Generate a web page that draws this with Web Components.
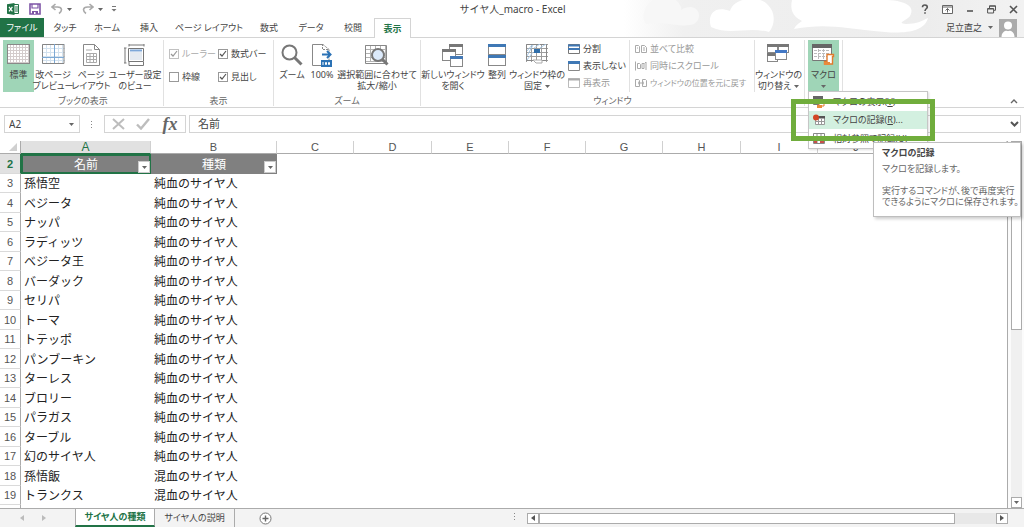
<!DOCTYPE html>
<html lang="ja">
<head>
<meta charset="utf-8">
<title>サイヤ人_macro - Excel</title>
<style>
html,body{margin:0;height:100%}
body{font:9px/12px "Noto Sans","Noto Sans CJK JP",sans-serif;color:#444;background:#fff;overflow:hidden}
</style>
</head>
<body>
<excel-app></excel-app>
<script>
const win = (x, y, w, h, c) => `<rect x="${x + .5}" y="${y + .5}" width="${w}" height="${h}" fill="#fff" stroke="#888"/><rect x="${x}" y="${y}" width="${w + 1}" height="3" fill="${c}"/>`;
const lines = (w, h, dx, dy, x0 = 0, y0 = 0) => {
  let d = '';
  for (let x = x0; x < w; x += dx) d += `M${x} ${y0}V${h}`;
  for (let y = y0; y < h; y += dy) d += `M${x0} ${y}H${w}`;
  return d;
};
const ICONS = {
  excel: [12, 12, '<path d="M7 1.500h4.500v9H7" fill="#fff" stroke="#217346"/><path d="M8 4h3M8 6h3M8 8h3" stroke="#217346"/><path d="M0 1.200L7.500 0v12L0 10.800z" fill="#217346"/><path d="M2 3.800l3.400 4.500M5.400 3.800L2 8.300" stroke="#fff" stroke-width="1.200"/>'],
  save: [12, 12, '<path d="M1 1h10v10H1z" fill="#fff" stroke="#7d54a6" stroke-width="1.600"/><path d="M3 1v4h6V1" fill="none" stroke="#7d54a6" stroke-width="1.200"/><path d="M3 8h6v3H3z" fill="#7d54a6"/><path d="M5 9h1.500v2H5z" fill="#fff"/>'],
  undo: [12, 12, '<path d="M4.500 1L1 4l3.500 3M1 4h5.500c5 0 5 4 1.500 6.500" fill="none" stroke="#aaa" stroke-width="1.600"/>'],
  redo: [12, 12, '<path d="M7.500 1L11 4 7.500 7M11 4H5.500c-5 0-5 4-1.500 6.500" fill="none" stroke="#aaa" stroke-width="1.600"/>'],
  caret: [5, 3, '<path d="M0 0h5L2.500 3z" fill="#666"/>'],
  custom: [6, 6, '<path d="M1 .5h4" stroke="#777"/><path d="M.5 3h5L3 5.500z" fill="#777"/>'],
  help: [8, 10, '<path d="M1.500 3.200C1.500.3 6.300.3 6.300 3c0 1.700-2.300 1.900-2.300 4M4 8.200v1.600" fill="none" stroke="#555" stroke-width="1.600"/>'],
  ribbonopt: [11, 9, '<path d="M.5.5h10v8H.5zM.5 2h10" fill="#fff" stroke="#666"/><path d="M5.500 7.500V3.500M3.500 5.500l2-2 2 2" fill="none" stroke="#666"/>'],
  min: [8, 9, '<path d="M1 6h6" stroke="#555" stroke-width="1.600"/>'],
  restore: [9, 9, '<path d="M2.500 3V.8h6v4.500H7M.6 3.500h6v4.500h-6zM.6 4h6M2.500 1.200h6" fill="none" stroke="#555"/>'],
  close: [9, 9, '<path d="M1 1l7 7M8 1L1 8" stroke="#555" stroke-width="1.600"/>'],
  user: [18, 18, '<path d="M0 0h18v18H0z" fill="#ababab"/><circle cx="9" cy="6.500" r="4" fill="#fff"/><path d="M2.500 18c0-9 13-9 13 0z" fill="#fff"/><path d="M6 10.500c2 1.500 4 1.500 6 0" stroke="#ababab" fill="none"/>'],
  normal: [23, 20, `<path d="M0 .5h22v19H0z" fill="#fff"/><path d="${lines(23, 20, 3, 3, .5, .5)}" stroke="#d3cccc" fill="none"/><rect x=".5" y=".5" width="22" height="19" fill="none" stroke="#888"/>`],
  pagebreak: [23, 20, `<path d="${lines(23, 20, 4, 4, .5, .5)}" stroke="#d3e2ef" fill="none"/><path d="M.5.500h21.500v19H.5z" fill="none" stroke="#858585"/><path d="M12.500 0v19M0 13.500h22" stroke="#7da9d4" fill="none"/>`],
  pagelayout: [17, 22, '<path d="M.5.5h11l5 5v16H.5z" fill="#fff" stroke="#888"/><path d="M11.500.5v5h5" fill="none" stroke="#888"/><path d="M3 6h6M3.500 9.500h10v9h-10zM3.500 12.500h10M3.500 15.500h10M7 9v9M10.500 9v9" fill="none" stroke="#aaa"/>'],
  userview: [22, 22, '<path d="M4.500 4.500h15v13h-15z" fill="#fff" stroke="#777"/><path d="M6 6.500h12" stroke="#7da7d8" stroke-width="2"/><path d="M6 8h12v8H6z" fill="#e4eaf1"/><path d="M1 4v15M0 4h2.500M0 19h2.500M5 1h15M5 0v2.500M20 0v2.500M19.500 18v3.500H5V18" fill="none" stroke="#777"/>'],
  zoom: [22, 22, '<circle cx="8.500" cy="8.500" r="7" fill="#fff" stroke="#777" stroke-width="2"/><path d="M13.500 13.500l7 7" stroke="#777" stroke-width="3"/>'],
  hundred: [21, 24, '<path d="M10 .5H.5v21H10" fill="#fff" stroke="#888"/><path d="M10.500 0v5.500H17V22M11 .5l6 5" fill="none" stroke="#888" stroke-dasharray="2 1"/><path d="M10 10.500h8M15 7l3.500 3.500L15 14" fill="none" stroke="#2b72b5" stroke-width="2"/><path d="M9 16h11v7H9z" fill="#2b72b5"/><path d="M11 18v3M13.500 18.500h1v2h-1zM16.500 18.500h1v2h-1z" stroke="#fff" fill="none"/>'],
  zoomsel: [24, 22, `<path d="${lines(21, 18, 5, 4, .5, 1.5)}" stroke="#b2b2b2" fill="none"/><path d="M.5 1.500h21v18H.5z" fill="none" stroke="#888"/><circle cx="13" cy="11" r="6" fill="#dceafb" stroke="#777" stroke-width="2"/><path d="M17.500 15.500l5 5" stroke="#777" stroke-width="3"/>`],
  newwin: [22, 23, win(7, 0, 13, 10, '#777') + win(0, 5, 13, 11, '#777') + win(8, 12, 12, 10, '#4479b5')],
  arrange: [20, 22, win(1, 0, 17, 10, '#3f78b5') + win(1, 11, 17, 10, '#3f78b5')],
  freeze: [22, 20, `<path d="${lines(22, 18, 5, 4, .5, .5)}" stroke="#9d9d9d" fill="none"/><path d="M.5.5h20v16H.5z" fill="none" stroke="#888"/><path d="M1 12L7 1M1 7l5-6M8 4l6-4M14 4l6-4M1 16l6-8" stroke="#aacbe8"/><path d="M8 5h6v4H8z" fill="#2f6eaa"/><path d="M7 16l3 3h6v-3z" fill="#fff" stroke="#aaa"/>`],
  split: [12, 10, '<path d="M.5.500h11v9H.5z" fill="#fff" stroke="#777"/><path d="M0 1.500h12M0 5h12" stroke="#3f78b5" stroke-width="2"/>'],
  hide: [12, 10, '<path d="M.5.500h11v9H.5z" fill="#fff" stroke="#888"/><path d="M0 1.500h12" stroke="#3f78b5" stroke-width="3"/>'],
  unhide: [12, 10, '<path d="M.5.500h11v9H.5z" fill="#fff" stroke="#bbb"/><path d="M0 1.500h12" stroke="#aaa" stroke-width="2"/>'],
  compare: [12, 10, '<path d="M.5 1.500h3l1 1v6h-4zM6.500 1.500h3l2 2v5h-5zM2 4h1M8 4h2M8 6h2" fill="none" stroke="#aaa"/>'],
  sync: [12, 10, '<path d="M.5.500v9M2.500 2.500h2l1 1v4h-3zM7 2.500h2v5H7zM11 1v8M9.500 2.500L11 1" fill="none" stroke="#aaa"/>'],
  resetpos: [12, 10, '<path d="M.5 1.500h3l1 1v6h-4zM7.500 1.500h3l1 1v6h-4zM3 5h6M4 3.500v3M8 3.500v3" fill="none" stroke="#aaa"/>'],
  switchwin: [23, 20, win(0, 0, 10, 8, '#777') + win(11, 0, 10, 8, '#777') + win(0, 9, 10, 8, '#777') + win(8, 6, 11, 9, '#4479c5')],
  macro: [24, 22, '<path d="M.5.5h19v16H.5z" fill="#fff" stroke="#777"/><path d="M0 0h20v4H0z" fill="#666"/><path d="M2 6.500h15M2 9.500h15M2 12.500h15M6.500 5v10M11.500 5v10" stroke="#bbb" stroke-dasharray="3 1"/><path d="M15 10.500h6.500v2h-1V20h-8v-2.500H15z" fill="#fff" stroke="#e07b2e" stroke-width="1.400"/><path d="M12 18h6v3h-6z" fill="#e88a3c"/>'],
  mview: [12, 12, '<path d="M.5.5h9v8h-9z" fill="#fff" stroke="#777"/><path d="M0 0h10v3H0z" fill="#666"/><path d="M6 6h5v4H6z" fill="#fff" stroke="#e07b2e"/><path d="M4 9h5v3H4z" fill="#e88a3c"/>'],
  mrec: [12, 12, '<path d="M2.500 2.500h9v8h-9zM5.500 5v5M8.500 5v5M3 7.500h8" fill="#fff" stroke="#999"/><path d="M5 2h7v2.500H5z" fill="#555"/><circle cx="3" cy="3.500" r="3" fill="#d24726"/>'],
  mrel: [12, 12, '<path d="M.5.5h11v10H.5zM4 0v11M8 0v11M0 4h12M0 7.500h12" fill="#fff" stroke="#888"/><path d="M1 8h3v2H1zM7 7h4v3H7z" fill="#c8514a"/>'],
  cancel: [13, 12, '<path d="M1 1l11 10M12 1L1 11" stroke="#bdbdbd" stroke-width="2"/>'],
  enter: [14, 12, '<path d="M1 6.500L5 10.500 13 1" fill="none" stroke="#bdbdbd" stroke-width="2.400"/>'],
  chev: [9, 6, '<path d="M1 1l3.500 3.500L8 1" fill="none" stroke="#555" stroke-width="2"/>'],
  up: [8, 5, '<path d="M1 4l3-3 3 3" fill="none" stroke="#666" stroke-width="1.400"/>'],
  dots: [2, 8, '<path d="M0 0h1v1H0zM0 3h1v1H0zM0 6h1v1H0z" fill="#888"/>'],
  left: [4, 6, '<path d="M4 0v6L0 3z" fill="currentColor"/>'],
  right: [4, 6, '<path d="M0 0v6l4-3z" fill="currentColor"/>'],
  add: [13, 13, '<circle cx="6.500" cy="6.500" r="5.500" fill="#fff" stroke="#777"/><path d="M3.500 6.500h6M6.500 3.500v6" stroke="#666" stroke-width="1.400"/>'],
  corner: [8, 8, '<path d="M8 0v8H0z" fill="#d0d0d0"/>']
};

const RESET = `*{box-sizing:border-box}
button{font:inherit;color:inherit;background:none;border:0;padding:0;margin:0;display:flex;align-items:center;justify-content:center}
input{font:inherit;color:inherit;margin:0}`;

function define(name, css, html) {
  customElements.define(name, class extends HTMLElement {
    constructor() {
      super();
      this.attachShadow({ mode: 'open' }).innerHTML =
        `<style>${RESET}${css}</style>${typeof html === 'function' ? html(this) : html}`;
    }
  });
}

define('x-icon', ':host{display:inline-block;flex:none;line-height:0}svg{display:block}', el => {
  const [w, h, body] = ICONS[el.getAttribute('name')];
  return `<svg width="${w}" height="${h}" viewBox="0 0 ${w} ${h}" aria-hidden="true">${body}</svg>`;
});

define('title-bar', `:host{display:flex;align-items:center;height:18px;padding:0 6px 0 7px;position:relative}
.quick,.win{display:flex;align-items:center;flex:1}
.quick{gap:4px}.quick button:nth-child(2){margin:0 6px}
.quick button:nth-child(4){margin-right:6px}.quick button:nth-child(6){margin-right:4px}
.win{justify-content:flex-end;gap:13px}
h1{margin:0;font-size:10px;font-weight:400}`,
`<div class="quick"><x-icon name="excel"></x-icon><button aria-label="save"><x-icon name="save"></x-icon></button>
<button aria-label="undo"><x-icon name="undo"></x-icon></button><button aria-label="undo list"><x-icon name="caret"></x-icon></button>
<button aria-label="redo"><x-icon name="redo"></x-icon></button><button aria-label="redo list"><x-icon name="caret"></x-icon></button>
<button aria-label="customize"><x-icon name="custom"></x-icon></button></div>
<h1><slot></slot></h1>
<div class="win">${['help', 'ribbonopt', 'min', 'restore', 'close'].map(n => `<button aria-label="${n}"><x-icon name="${n}"></x-icon></button>`).join('')}</div>`);

define('ribbon-tab', `:host{display:block;height:20px;width:42px}
:host([wide]){width:78px}
button{width:100%;height:19px;border:1px solid transparent;border-bottom:0;white-space:nowrap;font-feature-settings:"palt"}
:host([file]){width:44px}
:host([file]) button{background:#217346;color:#fff;border:0}
:host([active]){width:37px}
:host([active]) button{background:#fff;color:#217346;font-weight:700;border-color:#d4d4d4;height:20px}`,
'<button><slot></slot></button>');

define('ribbon-tabs', `:host{display:flex;height:20px;position:relative;border-bottom:1px solid #d4d4d4}
.tabs{display:flex}
.account{margin-left:auto;display:flex;align-items:center;padding-right:7px}
.account button{gap:6px;height:18px}`,
`<nav class="tabs"><ribbon-tab file>ファイル</ribbon-tab><ribbon-tab>タッチ</ribbon-tab><ribbon-tab>ホーム</ribbon-tab><ribbon-tab>挿入</ribbon-tab><ribbon-tab wide>ページ レイアウト</ribbon-tab><ribbon-tab>数式</ribbon-tab><ribbon-tab>データ</ribbon-tab><ribbon-tab>校閲</ribbon-tab><ribbon-tab active>表示</ribbon-tab></nav>
<div class="account"><button>足立直之<x-icon name="caret"></x-icon><x-icon name="user"></x-icon></button></div>`);

define('app-header', `:host{display:block;position:relative}
svg{position:absolute;right:0;top:0;width:400px;height:37px}`,
`<svg viewBox="0 0 400 37" preserveAspectRatio="none" aria-hidden="true"><defs><linearGradient id="g"><stop offset="0" stop-color="#fff"/><stop offset=".15" stop-color="#f0f0f0"/><stop offset=".75" stop-color="#ededed"/><stop offset="1" stop-color="#f2f2f2"/></linearGradient></defs>
<path d="M0 0h400v37H0z" fill="url(#g)"/>
<path d="M22 24c-6-8 0-22 8-24h22c4 4 6 8 5 10 10-6 18-2 18 6 0 5-5 9-9 9-12 2-22-4-44-1z" fill="#f7f7f7"/>
<path d="M87 27c-4-12 3-22 19-16 4-14 30-16 38-6 8 8 7 20 1 27-22-6-38 4-58-5z" fill="#fff"/>
<path d="M168 0h92c20 0 32 6 26 16-4 5-14 7-4 8 10 0 16-3 22-6-4 16-30 16-54 13-28-3-50-8-80-2 2-4 4-5 8-8-10-5-12-12-10-21z" fill="#fff"/></svg>
<title-bar>サイヤ人_macro - Excel</title-bar><ribbon-tabs></ribbon-tabs>`);

define('ribbon-button', `:host{display:block;flex:none}
button{width:100%;height:52px;padding-top:3px;flex-direction:column;justify-content:flex-start;white-space:nowrap;line-height:11px;font-feature-settings:"palt"}
.pic{height:24px;display:flex;align-items:flex-start;padding-top:1px;flex:none}
.text{text-align:center;padding-top:2px}
:host([active]) button{background:#9fd5b7}`,
el => `<button><span class="pic"><x-icon name="${el.getAttribute('icon')}"></x-icon></span><span class="text"><slot></slot></span></button>`);

define('ribbon-item', `:host{display:block}
button{gap:3px;height:17px;white-space:nowrap;font-feature-settings:"palt"}
:host([off]){color:#999}
:host([small]){font-size:8px}`,
el => `<button><x-icon name="${el.getAttribute('icon')}"></x-icon><span><slot></slot></span></button>`);

define('ribbon-check', `:host{display:block}
label{display:flex;align-items:center;gap:3px;height:23px;white-space:nowrap;font-feature-settings:"palt"}
input{appearance:none;width:10px;height:10px;border:1px solid #999;background:#fff;flex:none}
input:checked{background:#fff url("data:image/svg+xml,%3Csvg xmlns='http://www.w3.org/2000/svg' viewBox='0 0 8 8'%3E%3Cpath d='M1 4l2 2 4-5' fill='none' stroke='%23555' stroke-width='1.2'/%3E%3C/svg%3E")}
:host([off]){color:#aaa}:host([off]) input{opacity:.6}`,
el => `<label><input type="checkbox"${el.hasAttribute('on') ? ' checked' : ''}${el.hasAttribute('off') ? ' disabled' : ''}><slot></slot></label>`);

define('ribbon-group', `:host{display:flex;flex-direction:column;height:66px;border-right:1px solid #e1e1e1}
.body{display:flex;height:52px}
.label{text-align:center;height:14px;line-height:18px;color:#666;font-feature-settings:"palt"}`,
el => `<div class="body"><slot></slot></div><div class="label">${el.getAttribute('label') || ''}</div>`);

define('tool-tip', `:host{display:block;background:#fff;border:1px solid #bebebe;box-shadow:2px 2px 3px #0003;width:148px;height:75px;padding:4px 8px;line-height:12px;white-space:nowrap;color:#666;font-feature-settings:"palt"}
strong{display:block;color:#444}p{margin:4px 0 0}p+p{margin-top:10px;line-height:11px}`,
'<strong>マクロの記録</strong><p>マクロを記録します。</p><p>実行するコマンドが、後で再度実行<br>できるようにマクロに保存されます。</p>');

define('macro-menu', `:host{display:block;position:absolute;z-index:5;width:120px;height:58px}
.menu{background:#fff;border:1px solid #c6c6c6;box-shadow:1px 1px 2px #0002;height:58px;width:120px;padding-top:1px}
button{justify-content:flex-start;gap:8px;width:118px;height:18px;padding-left:4px;white-space:nowrap;font-feature-settings:"palt"}
.hot{background:#d3f0e0}
.hot+button{height:20px}
.frame{position:absolute;left:-17px;top:8px;width:144px;height:42px;border:5px solid #70ad3c}
tool-tip{position:absolute;left:65px;top:51px}`,
`<div class="menu"><button><x-icon name="mview"></x-icon><span>マクロの表示(<u>V</u>)</span></button><button class="hot"><x-icon name="mrec"></x-icon><span>マクロの記録(<u>R</u>)...</span></button><button><x-icon name="mrel"></x-icon><span>相対参照で記録(<u>U</u>)</span></button></div>
<div class="frame"></div><tool-tip></tool-tip>`);

define('view-ribbon', `:host{display:flex;position:relative;height:70px;padding:2px 0 0 3px;border-bottom:1px solid #d4d4d4}
.w31{width:31px}.w36{width:36px}.w38{width:38px}.w50{width:50px}.w56{width:56px}.w24{width:24px}.w86{width:86px}.w64{width:64px}
.g1{width:161px}.g2{width:110px}.g3{width:147px}.g4{width:384px}.g5{width:38px;padding-left:3px;position:relative}
.checks{display:grid;grid-template-columns:49px auto;padding:2px 0 0 5px;align-content:start}
.col{width:64px;height:52px;padding-left:3px}
.wide{width:125px;padding-left:5px;border-left:1px solid #e1e1e1}
.sw{width:48px;border-left:1px solid #e1e1e1}
x-icon[name=caret]{vertical-align:middle;margin-left:3px}
.solo x-icon{margin-left:0}
macro-menu{left:3px;top:51px}
.fold{position:absolute;right:6px;bottom:3px}`,
`<ribbon-group class="g1" label="ブックの表示"><ribbon-button class="w31" icon="normal" active>標準</ribbon-button><ribbon-button class="w38" icon="pagebreak">改ページ<br>プレビュー</ribbon-button><ribbon-button class="w38" icon="pagelayout">ページ<br>レイアウト</ribbon-button><ribbon-button class="w50" icon="userview">ユーザー設定<br>のビュー</ribbon-button></ribbon-group>
<ribbon-group class="g2" label="表示"><div class="checks"><ribbon-check on off>ルーラー</ribbon-check><ribbon-check on>数式バー</ribbon-check><ribbon-check>枠線</ribbon-check><ribbon-check on>見出し</ribbon-check></div></ribbon-group>
<ribbon-group class="g3" label="ズーム"><ribbon-button class="w36" icon="zoom">ズーム</ribbon-button><ribbon-button class="w24" icon="hundred">100%</ribbon-button><ribbon-button class="w86" icon="zoomsel">選択範囲に合わせて<br>拡大/縮小</ribbon-button></ribbon-group>
<ribbon-group class="g4" label="ウィンドウ"><ribbon-button class="w64" icon="newwin">新しいウィンドウ<br>を開く</ribbon-button><ribbon-button class="w24" icon="arrange">整列</ribbon-button><ribbon-button class="w56" icon="freeze">ウィンドウ枠の<br>固定<x-icon name="caret"></x-icon></ribbon-button>
<div class="col"><ribbon-item icon="split">分割</ribbon-item><ribbon-item icon="hide">表示しない</ribbon-item><ribbon-item off icon="unhide">再表示</ribbon-item></div>
<div class="col wide"><ribbon-item off icon="compare">並べて比較</ribbon-item><ribbon-item off icon="sync">同時にスクロール</ribbon-item><ribbon-item off small icon="resetpos">ウィンドウの位置を元に戻す</ribbon-item></div>
<ribbon-button class="sw" icon="switchwin">ウィンドウの<br>切り替え<x-icon name="caret"></x-icon></ribbon-button></ribbon-group>
<ribbon-group class="g5"><ribbon-button class="w31 solo" icon="macro" active>マクロ<br><x-icon name="caret"></x-icon></ribbon-button><macro-menu></macro-menu></ribbon-group>
<button class="fold" aria-label="collapse"><x-icon name="up"></x-icon></button>`);

define('formula-bar', `:host{display:flex;height:33px;padding:7px 3px 8px 4px}
.box{display:flex;align-items:center;border:1px solid #d4d4d4;height:18px;background:#fff}
input{border:0;outline:0;background:none;min-width:0;flex:1;padding:0;height:16px;line-height:16px}
.name{width:76px;padding:0 5px 0 4px;font-size:10px}
.grip{padding:5px 11px 0}
.acts{width:82px;padding:0 5px 0 7px;justify-content:space-between;margin-right:3px}
.fx{font:italic 700 18px/16px "Liberation Serif",serif;color:#666;width:20px;height:16px}
.formula{flex:1;padding:0 1px 0 8px;font-size:11px}`,
`<div class="box name"><input aria-label="name box" value="A2"><button aria-label="names"><x-icon name="caret"></x-icon></button></div>
<div class="grip"><x-icon name="dots"></x-icon></div>
<div class="box acts"><button aria-label="cancel"><x-icon name="cancel"></x-icon></button><button aria-label="enter"><x-icon name="enter"></x-icon></button><button class="fx">fx</button></div>
<div class="box formula"><input aria-label="formula" value="名前"><button aria-label="expand"><x-icon name="chev"></x-icon></button></div>`);

const P = '純血のサイヤ人', M = '混血のサイヤ人';
const ROWS = [['孫悟空', P], ['ベジータ', P], ['ナッパ', P], ['ラディッツ', P], ['ベジータ王', P], ['バーダック', P], ['セリパ', P], ['トーマ', P], ['トテッポ', P], ['パンブーキン', P], ['ターレス', P], ['ブロリー', P], ['パラガス', P], ['ターブル', P], ['幻のサイヤ人', P], ['孫悟飯', M], ['トランクス', M]];

define('sheet-grid', `:host{display:flex;flex:1;min-height:0;background:#fff}
.view{flex:1;min-width:0;overflow:hidden;border-right:1px solid #ababab}
table{border-collapse:separate;border-spacing:0;table-layout:fixed;width:100%;font:12px/17px "Noto Sans CJK JP",sans-serif;color:#222}
col.n{width:21px}col.a{width:130px}col.b{width:126px}col.c{width:77px}col.d{width:78px}
th,td{padding:0;white-space:nowrap;overflow:hidden}
th{font:11px/12px "Liberation Sans",sans-serif;color:#555}
thead tr{height:13px}
thead th{border-right:1px solid #d0d0d0;border-bottom:1px solid #ababab;height:13px;vertical-align:bottom}
thead th.corner{text-align:right;border-right-color:#ababab}
.corner x-icon{margin-right:3px}
thead .on{background:#e1e1e1;color:#217346;border-bottom-color:#217346;font-size:12px}
tbody tr{height:20px}tbody tr:nth-child(even){height:19px}
tbody th{border-right:1px solid #ababab;border-bottom:1px solid #dadada;text-align:center}
tbody .on{background:#e1e1e1;color:#217346;font-weight:700;border-right-color:#217346}
td{padding:0 0 2px 3px}
td.h{background:#808080;color:#fff;text-align:center;position:relative;padding:0 0 2px;overflow:visible}
td.sel{outline:2px solid #217346;outline-offset:-2px}
td.h button{position:absolute;right:1px;bottom:1px;width:12px;height:12px;background:#fff;border:1px solid #ccc}
.bar{width:16px;background:#fbfbfb;padding:0 2px 0 3px;display:flex;flex-direction:column;justify-content:space-between}
.track{flex:1;background:#f0f0f0}
.thumb{height:53%;background:#fff;border:1px solid #ababab;width:11px}
.bar button{width:11px;height:11px;border:1px solid #ababab;background:#fff}`,
`<div class="view"><table><colgroup><col class="n"><col class="a"><col class="b">${'cdcccdcc'.split('').map(c => `<col class="${c}">`).join('')}<col></colgroup>
<thead><tr><th class="corner"><x-icon name="corner"></x-icon></th>${'ABCDEFGHIJ'.split('').map(c => `<th${c === 'A' ? ' class="on"' : ''}>${c}</th>`).join('')}<th></th></tr></thead>
<tbody><tr><th class="on">2</th><td class="h sel">名前<button aria-label="filter"><x-icon name="caret"></x-icon></button></td><td class="h">種類<button aria-label="filter"><x-icon name="caret"></x-icon></button></td></tr>
${ROWS.map((r, i) => `<tr><th>${i + 3}</th><td>${r[0]}</td><td>${r[1]}</td></tr>`).join('')}<tr><th></th></tr></tbody></table></div>
<div class="bar"><div class="track"><div class="thumb"></div></div><button aria-label="down"><x-icon name="caret"></x-icon></button></div>`);

define('sheet-tabs', `:host{display:flex;height:19px;background:#f3f3f3;border-top:1px solid #ababab;flex:none;padding-right:16px}
.nav{display:flex;align-items:center;gap:18px;width:75px;padding-left:20px;color:#bbb}
.tab{height:18px;width:80px;border-right:1px solid #ababab;white-space:nowrap;font-feature-settings:"palt"}
.active{background:#fff;color:#217346;font-weight:700;border-left:1px solid #ababab;border-bottom:2px solid #217346}
.add{margin-left:24px;align-self:center}
.scroll{margin-left:auto;width:49%;display:flex;align-items:center}
.grip{padding-right:11px}
.track{flex:1;height:11px;background:#e8e8e8}
.thumb{width:91%;height:11px;background:#fff;border:1px solid #ababab}
.scroll button{width:12px;height:11px;border:1px solid #ababab;background:#fff;color:#555}`,
`<div class="nav"><button aria-label="previous"><x-icon name="left"></x-icon></button><button aria-label="next"><x-icon name="right"></x-icon></button></div>
<button class="tab active">サイヤ人の種類</button><button class="tab">サイヤ人の説明</button><button class="add" aria-label="add"><x-icon name="add"></x-icon></button>
<div class="scroll"><div class="grip"><x-icon name="dots"></x-icon></div><button aria-label="left"><x-icon name="left"></x-icon></button><div class="track"><div class="thumb"></div></div><button aria-label="right"><x-icon name="right"></x-icon></button></div>`);

define('excel-app', ':host{display:flex;flex-direction:column;height:100vh}',
'<app-header></app-header><view-ribbon></view-ribbon><formula-bar></formula-bar><sheet-grid></sheet-grid><sheet-tabs></sheet-tabs>');
</script>
</body>
</html>
